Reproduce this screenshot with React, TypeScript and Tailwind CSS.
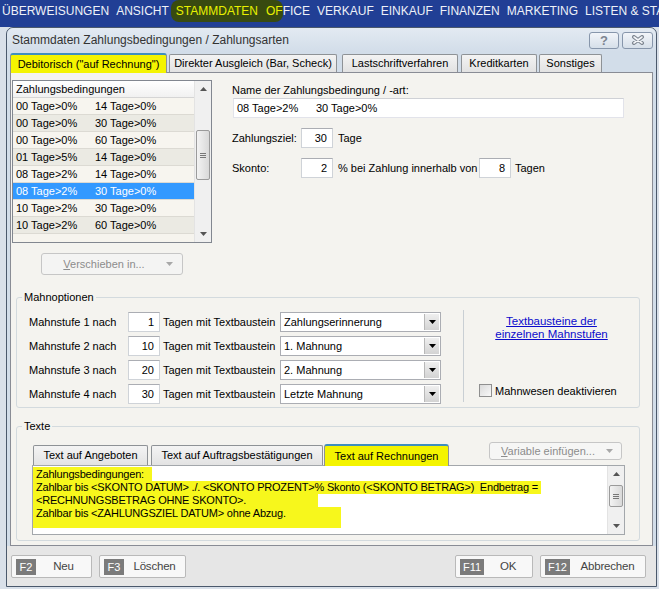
import React from 'react'

const rows = [
  ['00 Tage>0%', '14 Tage>0%'],
  ['00 Tage>0%', '30 Tage>0%'],
  ['00 Tage>0%', '60 Tage>0%'],
  ['01 Tage>5%', '14 Tage>0%'],
  ['08 Tage>2%', '14 Tage>0%'],
  ['08 Tage>2%', '30 Tage>0%'],
  ['10 Tage>2%', '30 Tage>0%'],
  ['10 Tage>2%', '60 Tage>0%'],
]
const selectedRow = 5

const mahnstufen = [
  { stufe: 1, tage: 1, text: 'Zahlungserinnerung' },
  { stufe: 2, tage: 10, text: '1. Mahnung' },
  { stufe: 3, tage: 20, text: '2. Mahnung' },
  { stufe: 4, tage: 30, text: 'Letzte Mahnung' },
]

const mainTabs = [
  { label: 'Debitorisch ("auf Rechnung")', cls: 'w-[157px]', active: true },
  { label: 'Direkter Ausgleich (Bar, Scheck)', cls: 'w-[168px] ml-[2px]' },
  { label: 'Lastschriftverfahren', cls: 'w-[116px] ml-[5px]' },
  { label: 'Kreditkarten', cls: 'w-[76px] ml-[3px]' },
  { label: 'Sonstiges', cls: 'w-[63px] ml-[2px]' },
]

function Tri({ up = false, color = '#000' }: { up?: boolean; color?: string }) {
  return (
    <svg width="7" height="4" viewBox="0 0 7 4">
      <path d={up ? 'M0 4h7L3.5 0z' : 'M0 0h7L3.5 4z'} fill={color} />
    </svg>
  )
}

function ScrollBar({ thumbTop, thumbH }: { thumbTop: string; thumbH: string }) {
  return (
    <div className="w-[17px] h-full flex flex-col bg-[#f0f0f0] border-l border-[#e3e3e3]">
      <div className="h-[16px] flex items-center justify-center">
        <Tri up color="#555" />
      </div>
      <div className="flex-1 px-[1px]">
        <div
          className={`${thumbTop} ${thumbH} rounded-[2px] border border-[#9b9b9b] bg-gradient-to-r from-[#f3f3f3] to-[#d9d9d9] flex flex-col items-center justify-center gap-[1px]`}
        >
          <div className="w-[6px] h-px bg-[#777]" />
          <div className="w-[6px] h-px bg-[#777]" />
          <div className="w-[6px] h-px bg-[#777]" />
        </div>
      </div>
      <div className="h-[16px] flex items-center justify-center">
        <Tri color="#555" />
      </div>
    </div>
  )
}

function NumBox({ value, cls = 'w-[32px]' }: { value: string; cls?: string }) {
  return (
    <div
      className={`${cls} h-[20px] bg-white border border-[#cfd3d8] border-t-[#abadb3] text-right pr-[5px] leading-[18px]`}
    >
      {value}
    </div>
  )
}

function Select({ text }: { text: string }) {
  return (
    <div className="w-[161px] h-[20px] bg-white border border-[#abadb3] flex items-stretch">
      <span className="flex-1 pl-[3px] leading-[18px]">{text}</span>
      <span className="w-[15px] my-[1px] mr-[1px] border-l border-[#b8b8b8] bg-gradient-to-b from-[#efefef] to-[#d3d3d3] flex items-center justify-center">
        <Tri />
      </span>
    </div>
  )
}

function FKey({ k, label, cls }: { k: string; label: string; cls: string }) {
  return (
    <div
      className={`${cls} h-[23px] flex items-center pl-[4px] border border-[#b9b9b9] rounded-[2px] bg-[#f8f8f8]`}
    >
      <span className="h-[16px] min-w-[20px] px-[3px] bg-[#7b7b7b] text-white text-[11px] leading-[16px] text-center">
        {k}
      </span>
      <span className="flex-1 text-center text-[#444] text-[11.5px] tracking-[-0.2px]">{label}</span>
    </div>
  )
}

function App() {
  return (
    <div className="w-[659px] h-[589px] overflow-hidden bg-[#d9e0e9] font-['Liberation_Sans',Arial,sans-serif] text-[11px] text-black">
      {/* main menu of the application */}
      <div className="h-[27px] bg-[#213f95] flex items-start pt-[4px] pl-[2px] gap-[7px] text-[12px] leading-[14px] text-[#eef1f8] whitespace-nowrap overflow-hidden">
        <span>ÜBERWEISUNGEN</span>
        <span>ANSICHT</span>
        <span>
          <span className="bg-[#384a10] text-[#e8f100] rounded-[8px] -ml-[5px] pl-[5px] py-[4px]">
            STAMMDATEN<span className="ml-[8px]">OF</span>
          </span>
          FICE
        </span>
        <span>VERKAUF</span>
        <span>EINKAUF</span>
        <span>FINANZEN</span>
        <span>MARKETING</span>
        <span>LISTEN &amp; STA</span>
      </div>

      {/* dialog window */}
      <div className="ml-[6px] w-[651px] h-[560px] rounded-t-[7px] border border-[#4b596c] bg-[#d2dde9] flex flex-col">
        <div className="h-[24px] flex items-center rounded-t-[7px] bg-gradient-to-b from-[#e3eaf2] to-[#d2dde9]">
          <span className="ml-[5px] text-[12px] text-[#333]">Stammdaten Zahlungsbedingungen / Zahlungsarten</span>
          <div className="ml-auto mr-[3px] flex gap-[3px]">
            <div className="w-[30px] h-[17px] rounded-[3px] border border-[#8796ab] bg-gradient-to-b from-[#f2f5f9] to-[#d6dfe9] flex items-center justify-center text-[13px] font-bold text-[#7d8590] leading-none">
              ?
            </div>
            <div className="w-[31px] h-[17px] rounded-[3px] border border-[#8796ab] bg-gradient-to-b from-[#f2f5f9] to-[#d6dfe9] flex items-center justify-center">
              <svg width="14" height="10" viewBox="0 0 14 10">
                <path d="M3 2l8 6M11 2L3 8" stroke="#7d8590" strokeWidth="4" strokeLinecap="round" />
                <path d="M3 2l8 6M11 2L3 8" stroke="#f4f6f9" strokeWidth="1.6" strokeLinecap="round" />
              </svg>
            </div>
          </div>
        </div>

        {/* main tabs */}
        <div className="h-[20px] ml-[3px] flex items-end">
          {mainTabs.map((t) =>
            t.active ? (
              <div
                key={t.label}
                className={`${t.cls} h-[20px] -mb-px relative z-10 border border-[#8e9296] border-b-0 border-t-2 border-t-[#3f8fbf] rounded-t-[3px] bg-[#f4f400] flex items-center justify-center`}
              >
                {t.label}
              </div>
            ) : (
              <div
                key={t.label}
                className={`${t.cls} h-[18px] border border-[#8e9296] border-b-0 rounded-t-[2px] bg-gradient-to-b from-[#f3f3f3] to-[#e2e2e2] flex items-center justify-center`}
              >
                {t.label}
              </div>
            ),
          )}
        </div>

        {/* tab page */}
        <div className="ml-[3px] w-[643px] h-[474px] border border-[#898c95] bg-[#f4f3ef] flex flex-col">
          <div className="flex pt-[7px] h-[202px]">
            <div className="ml-[1px] w-[200px] flex flex-col">
              <div className="h-[163px] border border-[#828790] bg-[#f6f4ee] flex">
                <div className="flex-1 flex flex-col">
                  <div className="h-[17px] pl-[3px] leading-[16px] bg-gradient-to-b from-white to-[#f1f1f1] border-b border-[#d5d5d5]">
                    Zahlungsbedingungen
                  </div>
                  {rows.map((r, i) => (
                    <div
                      key={i}
                      className={`h-[17px] flex items-center pl-[3px] border-b border-[#dcdad3] ${
                        i === selectedRow
                          ? 'bg-[#3399ff] text-white'
                          : i % 2 === 0
                            ? 'bg-[#f7f5ef]'
                            : 'bg-[#ebeae3]'
                      }`}
                    >
                      <span className="w-[79px]">{r[0]}</span>
                      <span>{r[1]}</span>
                    </div>
                  ))}
                </div>
                <ScrollBar thumbTop="mt-[33px]" thumbH="h-[50px]" />
              </div>
              <div className="mt-[10px] ml-[29px] w-[142px] h-[22px] rounded-[3px] border border-[#c6c6c6] bg-[#f4f4f3] flex items-center text-[#8c8c8c]">
                <span className="flex-1 text-center">
                  <span className="underline">V</span>erschieben in...
                </span>
                <span className="mr-[9px]">
                  <Tri color="#a8a8a8" />
                </span>
              </div>
            </div>

            <div className="ml-[20px] flex flex-col">
              <div className="mt-[3px] leading-[14px]">Name der Zahlungsbedingung / -art:</div>
              <div className="mt-[1px] ml-[1px] w-[391px] h-[20px] bg-white border border-[#e2e3ea] border-t-[#cfd1d6] pl-[3px] leading-[18px] flex">
                <span className="w-[79px]">08 Tage&gt;2%</span>
                <span>30 Tage&gt;0%</span>
              </div>
              <div className="mt-[10px] flex items-center h-[20px]">
                <span className="w-[69px]">Zahlungsziel:</span>
                <NumBox value="30" />
                <span className="ml-[5px]">Tage</span>
              </div>
              <div className="mt-[10px] flex items-center h-[20px]">
                <span className="w-[69px]">Skonto:</span>
                <NumBox value="2" />
                <span className="ml-[5px] w-[141px]">% bei Zahlung innerhalb von</span>
                <NumBox value="8" />
                <span className="ml-[4px]">Tagen</span>
              </div>
            </div>
          </div>

          {/* Mahnoptionen */}
          <fieldset className="mt-[15px] ml-[5px] w-[624px] h-[118px] border border-[#d3dade] rounded-[3px]">
            <legend className="ml-[5px] px-[2px] leading-[14px]">Mahnoptionen</legend>
            <div className="flex pt-[8px]">
              <div className="pl-[12px] flex flex-col gap-[4px]">
                {mahnstufen.map((m) => (
                  <div key={m.stufe} className="h-[20px] flex items-center">
                    <span className="w-[99px]">Mahnstufe {m.stufe} nach</span>
                    <NumBox value={String(m.tage)} />
                    <span className="ml-[3px] w-[117px]">Tagen mit Textbaustein</span>
                    <Select text={m.text} />
                  </div>
                ))}
              </div>
              <div className="ml-[22px] -mt-[2px] w-px h-[92px] bg-[#c9cfd4]" />
              <div className="flex-1 flex flex-col">
                <div className="mt-[3px] text-center leading-[13px] text-[11.5px] text-[#0b0bcc] underline">
                  Textbausteine der
                  <br />
                  einzelnen Mahnstufen
                </div>
                <div className="mt-auto mb-[5px] ml-[15px] flex items-center gap-[3px]">
                  <span className="w-[13px] h-[13px] border border-[#8f8f8f] bg-gradient-to-br from-[#dadada] to-[#f9f9f9]" />
                  <span>Mahnwesen deaktivieren</span>
                </div>
              </div>
            </div>
          </fieldset>

          {/* Texte */}
          <fieldset className="mt-[11px] ml-[5px] w-[624px] h-[122px] border border-[#d3dade] rounded-[3px]">
            <legend className="ml-[5px] px-[2px] leading-[14px]">Texte</legend>
            <div className="pt-[10px] flex flex-col">
              <div className="h-[22px] pl-[16px] flex items-end">
                <div className="w-[115px] h-[20px] border border-[#8e9296] border-b-0 rounded-t-[2px] bg-gradient-to-b from-[#f4f4f4] to-[#e3e3e3] flex items-center justify-center">
                  Text auf Angeboten
                </div>
                <div className="ml-[3px] w-[172px] h-[20px] border border-[#8e9296] border-b-0 rounded-t-[2px] bg-gradient-to-b from-[#f4f4f4] to-[#e3e3e3] flex items-center justify-center">
                  Text auf Auftragsbestätigungen
                </div>
                <div className="ml-[1px] w-[125px] h-[22px] -mb-px relative z-10 border border-[#8e9296] border-b-0 border-t-2 border-t-[#3f8fbf] rounded-t-[3px] bg-[#f4f400] flex items-center justify-center">
                  Text auf Rechnungen
                </div>
                <div className="ml-auto mr-[17px] self-start -mt-[1px] w-[133px] h-[18px] rounded-[3px] border border-[#c6c6c6] bg-[#f6f6f5] flex items-center text-[#8c8c8c]">
                  <span className="flex-1 text-center">
                    <span className="underline">V</span>ariable einfügen...
                  </span>
                  <span className="mr-[8px]">
                    <Tri color="#a8a8a8" />
                  </span>
                </div>
              </div>
              <div className="ml-[15px] w-[593px] h-[70px] border border-[#a3a7ab] bg-white flex">
                <div className="flex-1 pt-[1px] text-[11px] tracking-[-0.2px] leading-[13px] whitespace-pre">
                  <div className="w-fit pr-[8px] pl-[3px] pt-[1px] bg-[#f7f71c]">Zahlungsbedingungen:</div>
                  <div className="w-fit pr-[3px] pl-[3px] bg-[#f7f71c]">
                    {'Zahlbar bis <SKONTO DATUM> ./. <SKONTO PROZENT>% Skonto (<SKONTO BETRAG>)  Endbetrag ='}
                  </div>
                  <div className="w-fit pr-[72px] pl-[3px] bg-[#f7f71c]">{'<RECHNUNGSBETRAG OHNE SKONTO>.'}</div>
                  <div className="w-fit pr-[55px] pl-[3px] pb-[8px] bg-[#f7f71c]">
                    {'Zahlbar bis <ZAHLUNGSZIEL DATUM> ohne Abzug.'}
                  </div>
                </div>
                <ScrollBar thumbTop="mt-[3px]" thumbH="h-[22px]" />
              </div>
            </div>
          </fieldset>
        </div>

        {/* bottom buttons */}
        <div className="flex-1 bg-[#e6e6e6] flex items-start pt-[9px] pl-[4px] pr-[10px]">
          <FKey k="F2" label="Neu" cls="w-[81px]" />
          <FKey k="F3" label="Löschen" cls="ml-[7px] w-[87px]" />
          <FKey k="F11" label="OK" cls="ml-auto w-[78px]" />
          <FKey k="F12" label="Abbrechen" cls="ml-[7px] w-[106px]" />
        </div>
      </div>
    </div>
  )
}

export default App
